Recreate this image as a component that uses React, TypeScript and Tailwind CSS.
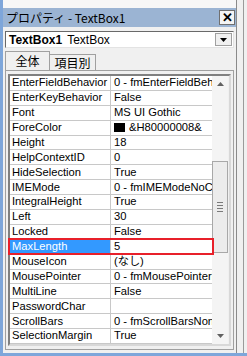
const rows: { name: string; value: string; swatch?: boolean }[] = [
  { name: "EnterFieldBehavior", value: "0 - fmEnterFieldBehaviorSelectAll" },
  { name: "EnterKeyBehavior", value: "False" },
  { name: "Font", value: "MS UI Gothic" },
  { name: "ForeColor", value: "&H80000008&", swatch: true },
  { name: "Height", value: "18" },
  { name: "HelpContextID", value: "0" },
  { name: "HideSelection", value: "True" },
  { name: "IMEMode", value: "0 - fmIMEModeNoControl" },
  { name: "IntegralHeight", value: "True" },
  { name: "Left", value: "30" },
  { name: "Locked", value: "False" },
  { name: "MaxLength", value: "5" },
  { name: "MouseIcon", value: "(なし)" },
  { name: "MousePointer", value: "0 - fmMousePointerDefault" },
  { name: "MultiLine", value: "False" },
  { name: "PasswordChar", value: "" },
  { name: "ScrollBars", value: "0 - fmScrollBarsNone" },
  { name: "SelectionMargin", value: "True" },
];

const ui = { fontFamily: '"Liberation Sans", "Noto Sans CJK JP", sans-serif' };

export default function App() {
  return (
    <div className="flex h-[356px] w-[247px] flex-col overflow-hidden bg-[#f0f0f0] text-black" style={ui}>
      <div className="flex flex-1">
        <div className="w-[3px] bg-[#7ea6da]" />
        <div className="flex w-[234px] flex-col border-r border-[#8a8a8a] bg-[#f0f0f0]">
          <div className="h-[8px] bg-[#f7f7f7]" />

          {/* title bar */}
          <div className="flex h-[19px] items-center justify-between bg-[#9bb4d3] pl-[3px] pr-[1px]">
            <span className="text-[12px] leading-none" style={{ fontFamily: '"Noto Sans CJK JP", sans-serif' }}>
              プロパティ - TextBox1
            </span>
            <div className="flex h-[15px] w-[16px] items-center justify-center border border-[#707070] bg-[#f4f4f4] text-[13px] font-bold leading-none">
              ✕
            </div>
          </div>

          {/* object combo */}
          <div className="mx-[2px] mt-[4px] flex h-[17px] items-center border border-t-[#696969] border-l-[#696969] border-r-[#e3e3e3] border-b-[#e3e3e3] bg-white pl-[3px] pr-[1px]">
            <span className="text-[12px] font-bold leading-none">TextBox1</span>
            <span className="ml-[5px] text-[12px] leading-none">TextBox</span>
            <div className="ml-auto flex h-[13px] w-[17px] items-center justify-center border border-[#a0a0a0] bg-[#f0f0f0]">
              <svg width="7" height="4" viewBox="0 0 7 4">
                <path d="M0 0h7L3.5 4z" fill="#000" />
              </svg>
            </div>
          </div>

          {/* tabs */}
          <div className="mt-[3px] flex h-[19px] items-end pl-[2px]">
            <div className="relative z-10 flex h-[19px] w-[45px] items-start justify-center border-l border-t border-r border-[#a0a0a0] bg-[#f0f0f0] pt-[3px] text-[12px] leading-none" style={{ fontFamily: '"Noto Sans CJK JP", sans-serif' }}>
              全体
            </div>
            <div className="flex h-[16px] w-[46px] items-start justify-center border-t border-r border-[#a0a0a0] pt-[2px] text-[12px] leading-none" style={{ fontFamily: '"Noto Sans CJK JP", sans-serif' }}>
              項目別
            </div>
          </div>

          {/* property grid */}
          <div className="mx-[2px] flex flex-1 flex-col border-x border-b border-t border-[#a0a0a0] pb-[3px] pl-[2px] pr-[2px] pt-[3px]">
            <div className="relative flex border-2 border-t-[#808080] border-l-[#808080] border-r-[#d8d8d8] border-b-[#d8d8d8]">
              <div className="flex w-[202px] flex-col bg-white">
                {rows.map((r) => {
                  const sel = r.name === "MaxLength";
                  return (
                    <div key={r.name} className="flex h-[14.9px] border-b border-[#c8c8c8] text-[11.2px] leading-none">
                      <div className={`flex w-[101px] shrink-0 items-center overflow-hidden whitespace-nowrap border-r border-[#c8c8c8] pl-[2px] ${sel ? "bg-[#3399ff] text-white" : ""}`}>
                        {r.name}
                      </div>
                      <div className="flex flex-1 items-center overflow-hidden whitespace-nowrap pl-[3px]">
                        {r.swatch && <span className="mr-[4px] inline-block h-[9px] w-[11px] shrink-0 bg-black" />}
                        {r.value}
                      </div>
                    </div>
                  );
                })}
              </div>

              {/* scrollbar */}
              <div className="flex w-[16px] flex-col bg-[#f4f4f4]">
                <div className="flex h-[16px] items-center justify-center">
                  <svg width="7" height="4" viewBox="0 0 7 4">
                    <path d="M3.5 0L7 4H0z" fill="#606060" />
                  </svg>
                </div>
                <div className="h-[69px]" />
                <div className="flex h-[92px] items-center justify-center border border-[#a8a8a8] bg-[#ececec]">
                  <div className="flex flex-col gap-[2px]">
                    <div className="h-px w-[6px] bg-[#7a7a7a]" />
                    <div className="h-px w-[6px] bg-[#7a7a7a]" />
                    <div className="h-px w-[6px] bg-[#7a7a7a]" />
                    <div className="h-px w-[6px] bg-[#7a7a7a]" />
                  </div>
                </div>
                <div className="flex-1" />
                <div className="flex h-[16px] items-center justify-center">
                  <svg width="7" height="4" viewBox="0 0 7 4">
                    <path d="M0 0h7L3.5 4z" fill="#606060" />
                  </svg>
                </div>
              </div>

              {/* highlight annotation */}
              <div className="pointer-events-none absolute left-[-2px] top-[162px] h-[17px] w-[206px] border-2 border-[#e8202a]" />
            </div>
          </div>
          <div className="h-[3px]" />
        </div>
        <div className="flex w-[10px] justify-center">
          <div className="ml-[2px] h-full w-px bg-[#9a9a9a]" />
        </div>
      </div>
      <div className="h-[4px] bg-[#7ea6da]" />
    </div>
  );
}
